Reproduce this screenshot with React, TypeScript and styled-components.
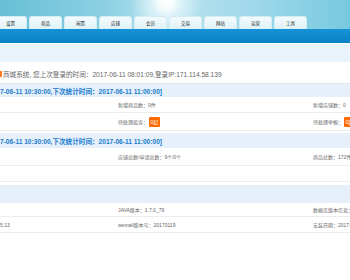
import React from 'react';
import styled, { createGlobalStyle } from 'styled-components';

const GlobalStyle = createGlobalStyle`
  html, body {
    margin: 0;
    padding: 0;
    background: #fff;
    overflow: hidden;
  }
  body {
    font-family: "Liberation Sans", "Noto Sans CJK SC", sans-serif;
    color: #555;
  }
`;

const Page = styled.div`
  width: 350px;
  height: 280px;
  display: flex;
  flex-direction: column;
`;

const Sky = styled.div`
  height: 29px;
  flex: none;
  overflow: hidden;
  background:
    radial-gradient(circle at 166px 2px, #ffffff 0, #f6fcfd 7px, rgba(232, 247, 251, 0.75) 15px, rgba(200, 235, 245, 0) 36px),
    linear-gradient(90deg, #67c0d7 0%, #8cd0e2 30%, #b9e3ef 48%, #a2d9ea 70%, #77c9df 100%);
`;

const TabRow = styled.div`
  display: flex;
  gap: 2px;
  margin-left: -6px;
  padding-top: 16px;
`;

const Tab = styled.div`
  width: 33px;
  height: 13px;
  flex: none;
  box-sizing: border-box;
  border: 1px solid #d4ecf3;
  border-bottom: none;
  border-radius: 3px 3px 0 0;
  background: linear-gradient(#f3fbfd, #dff2f8);
  font-size: 4.5px;
  color: #222;
  display: flex;
  align-items: center;
  justify-content: center;
`;

const BlueBar = styled.div`
  height: 14px;
  flex: none;
  background: linear-gradient(#1692d6, #0b80c5);
  border-bottom: 1px solid #fff;
`;

const SubBar = styled.div`
  height: 18px;
  flex: none;
  background: #e9f3fc;
`;

const Welcome = styled.div`
  height: 22px;
  flex: none;
  box-sizing: border-box;
  border-bottom: 1px solid #e6e6e6;
  display: flex;
  align-items: center;
  padding-top: 2px;
  font-size: 6.6px;
  color: #666;
  white-space: nowrap;
`;

const Mark = styled.span`
  width: 2px;
  height: 6px;
  background: #ff7a1a;
  margin-right: 1px;
`;

const Section = styled.div<{ $gap?: number }>`
  flex: none;
  margin-top: ${(p) => p.$gap || 0}px;
`;

const Head = styled.div<{ $h: number }>`
  height: ${(p) => p.$h}px;
  background: #e5f0fb;
  color: #1b7ccc;
  font-weight: bold;
  font-size: 6.6px;
  display: flex;
  align-items: center;
  white-space: nowrap;
`;

const Row = styled.div<{ $h?: number }>`
  height: ${(p) => p.$h || 16}px;
  box-sizing: border-box;
  border-bottom: 1px solid #ececec;
  display: grid;
  grid-template-columns: 118px 195px 1fr;
  align-items: center;
  font-size: 5px;
  color: #666;
  white-space: nowrap;
  overflow: hidden;
`;

const Cell = styled.div`
  display: flex;
  align-items: center;
  overflow: hidden;
`;

const Badge = styled.span`
  background: #ff6a00;
  color: #fff;
  font-size: 5px;
  padding: 1.5px 1.5px;
  border-radius: 1px;
  margin-left: 1px;
`;

const tabs = ['设置', '商品', '闲置', '店铺', '会员', '交易', '网站', '运营', '工具'];

export default function App() {
  return (
    <Page>
      <GlobalStyle />
      <Sky>
        <TabRow>
          {tabs.map((t) => (
            <Tab key={t}>{t}</Tab>
          ))}
        </TabRow>
      </Sky>
      <BlueBar />
      <SubBar />
      <Welcome>
        <Mark />
        商城系统, 您上次登录的时间：2017-06-11 08:01:09,登录IP:171.114.58.139
      </Welcome>

      <Section>
        <Head $h={13}>7-06-11 10:30:00,下次统计时间：2017-06-11 11:00:00]</Head>
        <Row>
          <Cell />
          <Cell>新增商品数：0件</Cell>
          <Cell>新增店铺数：0</Cell>
        </Row>
        <Row $h={18}>
          <Cell />
          <Cell>
            待处理投诉：<Badge>0起</Badge>
          </Cell>
          <Cell>
            待处理举报：<Badge>0起</Badge>
          </Cell>
        </Row>
      </Section>

      <Section $gap={2}>
        <Head $h={15}>7-06-11 10:30:00,下次统计时间：2017-06-11 11:00:00]</Head>
        <Row $h={18}>
          <Cell />
          <Cell>店铺总数/申请总数：9个/0个</Cell>
          <Cell>商品总数：172件</Cell>
        </Row>
        <Row>
          <Cell />
          <Cell />
          <Cell />
        </Row>
      </Section>

      <Section $gap={3}>
        <Head $h={18} />
        <Row $h={14}>
          <Cell />
          <Cell>JAVA版本：1.7.0_79</Cell>
          <Cell>数据库版本信息：MySQL</Cell>
        </Row>
        <Row $h={16}>
          <Cell>5.13</Cell>
          <Cell>wemall版本号：20170119</Cell>
          <Cell>安装日期：2017-01-19</Cell>
        </Row>
      </Section>
    </Page>
  );
}
